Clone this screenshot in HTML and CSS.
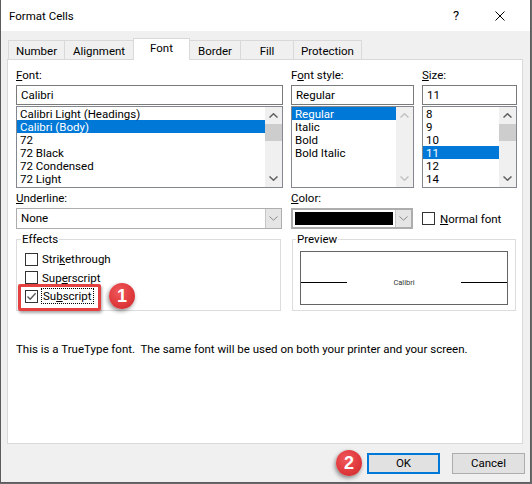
FILE: index.html
```html
<!DOCTYPE html>
<html lang="en">
<head>
	<meta charset="UTF-8">
	<title>Format Cells</title>
	<link rel="stylesheet" href="styles.css">
</head>
<body>
<div class="window">
	<div class="titlebar">
		<span class="title">Format Cells</span>
		<span class="tbtn help">?</span>
		<span class="tbtn close">
			<svg width="10" height="10" viewBox="0 0 10 10"><path d="M0.5 0.5L9.5 9.5M9.5 0.5L0.5 9.5"/></svg>
		</span>
	</div>

	<div class="client">
		<div class="tabs">
			<div class="tab w-number">Number</div>
			<div class="tab w-align">Alignment</div>
			<div class="tab active w-font">Font</div>
			<div class="tab w-border">Border</div>
			<div class="tab w-fill">Fill</div>
			<div class="tab w-prot">Protection</div>
		</div>

		<div class="panel">
			<div class="top-grid">
				<div class="col">
					<div class="lbl"><u>F</u>ont:</div>
					<div class="field">Calibri</div>
					<div class="listbox">
						<ul class="items">
							<li>Calibri Light (Headings)</li>
							<li class="sel">Calibri (Body)</li>
							<li>72</li>
							<li>72 Black</li>
							<li>72 Condensed</li>
							<li>72 Light</li>
						</ul>
						<div class="vscroll">
							<span class="sarrow"><svg width="9" height="5" viewBox="0 0 9 5"><polyline points="0.5,4.5 4.5,0.8 8.5,4.5"/></svg></span>
							<span class="thumb"></span>
							<span class="sfill"></span>
							<span class="sarrow"><svg width="9" height="5" viewBox="0 0 9 5"><polyline points="0.5,0.5 4.5,4.2 8.5,0.5"/></svg></span>
						</div>
					</div>
				</div>
				<div class="col">
					<div class="lbl">F<u>o</u>nt style:</div>
					<div class="field">Regular</div>
					<div class="listbox">
						<ul class="items">
							<li class="sel">Regular</li>
							<li>Italic</li>
							<li>Bold</li>
							<li>Bold Italic</li>
						</ul>
						<div class="vscroll off">
							<span class="sarrow"><svg width="9" height="5" viewBox="0 0 9 5"><polyline points="0.5,4.5 4.5,0.8 8.5,4.5"/></svg></span>
							<span class="sfill"></span>
							<span class="sarrow"><svg width="9" height="5" viewBox="0 0 9 5"><polyline points="0.5,0.5 4.5,4.2 8.5,0.5"/></svg></span>
						</div>
					</div>
				</div>
				<div class="col">
					<div class="lbl"><u>S</u>ize:</div>
					<div class="field">11</div>
					<div class="listbox">
						<ul class="items">
							<li>8</li>
							<li>9</li>
							<li>10</li>
							<li class="sel">11</li>
							<li>12</li>
							<li>14</li>
						</ul>
						<div class="vscroll">
							<span class="sarrow"><svg width="9" height="5" viewBox="0 0 9 5"><polyline points="0.5,4.5 4.5,0.8 8.5,4.5"/></svg></span>
							<span class="thumb"></span>
							<span class="sfill"></span>
							<span class="sarrow"><svg width="9" height="5" viewBox="0 0 9 5"><polyline points="0.5,0.5 4.5,4.2 8.5,0.5"/></svg></span>
						</div>
					</div>
				</div>
			</div>

			<div class="mid-grid">
				<div class="col">
					<div class="lbl"><u>U</u>nderline:</div>
					<div class="combo under">
						<span class="combo-text">None</span>
						<span class="drop"><svg width="9" height="5" viewBox="0 0 9 5"><polyline points="0.5,0.5 4.5,4.2 8.5,0.5"/></svg></span>
					</div>
				</div>
				<div class="col">
					<div class="lbl"><u>C</u>olor:</div>
					<div class="combo color">
						<span class="swatch"></span>
						<span class="drop"><svg width="9" height="5" viewBox="0 0 9 5"><polyline points="0.5,0.5 4.5,4.2 8.5,0.5"/></svg></span>
					</div>
				</div>
				<div class="col normal">
					<span class="chk"></span>
					<span><u>N</u>ormal font</span>
				</div>
			</div>

			<div class="groups">
				<fieldset class="group effects">
					<legend>Effects</legend>
					<div class="crow"><span class="chk"></span><span>Stri<u>k</u>ethrough</span></div>
					<div class="crow"><span class="chk"></span><span>Sup<u>e</u>rscript</span></div>
					<div class="crow"><span class="chk on">
						<svg width="11" height="11" viewBox="0 0 11 11"><polyline points="1.5,5.5 4.2,8.3 9.6,2.2"/></svg>
					</span><span class="focus">Su<u>b</u>script</span></div>
				</fieldset>
				<fieldset class="group preview">
					<legend>Preview</legend>
					<div class="pbox">
						<span class="pline"></span>
						<span class="ptext">Calibri</span>
						<span class="pline"></span>
					</div>
				</fieldset>
			</div>

			<p class="note">This is a TrueType font.&nbsp; The same font will be used on both your printer and your screen.</p>
		</div>

		<div class="buttons">
			<div class="btn default">OK</div>
			<div class="btn">Cancel</div>
		</div>
	</div>

	<!-- callouts drawn over the dialog -->
	<div class="mark"></div>
	<div class="badge b1">1</div>
	<div class="badge b2">2</div>
</div>
</body>
</html>
```

FILE: styles.css
```css
*{margin:0;padding:0;box-sizing:border-box;}
html,body{height:100%;}
body{
	background:#6a6a6a;
	font-family:Roboto,"Liberation Sans",sans-serif;
	font-size:11.5px;
	color:#000;
}
u{text-decoration:underline;text-underline-offset:1px;}

.window{
	position:relative;
	width:531px;
	height:483px;
	background:#f0f0f0;
	border:1px solid #5c5c5c;
	border-top:0;
	display:flex;
	flex-direction:column;
}

/* title bar */
.titlebar{
	height:31px;
	background:#fff;
	display:flex;
	align-items:center;
	padding-left:8px;
	padding-right:8px;
}
.title{flex:1;}
.tbtn{
	width:44px;
	height:31px;
	display:flex;
	align-items:center;
	justify-content:center;
}
.help{font-size:13px;}
.close svg path{stroke:#000;stroke-width:1;fill:none;}

/* tabs */
.client{flex:1;padding:7px 6px 0 6px;}
.tabs{
	display:flex;
	align-items:flex-end;
	height:21px;
	padding-left:1px;
}
.tab{
	height:19px;
	margin-right:-1px;
	border:1px solid #d9d9d9;
	border-bottom:0;
	background:#f0f0f0;
	text-align:center;
	padding-top:3px;
	line-height:15px;
}
.tab.active{
	height:22px;
	margin-bottom:-1px;
	background:#fff;
	position:relative;
	z-index:1;
	padding-top:2px;
}
.w-number{width:57px;}
.w-align{width:70px;}
.w-font{width:57px;}
.w-border{width:52px;}
.w-fill{width:54px;}
.w-prot{width:69px;}

.panel{
	width:516px;
	height:385px;
	background:#fff;
	border:1px solid #d9d9d9;
	padding:7px 0 0 8px;
}

/* font / style / size lists */
.top-grid{
	display:grid;
	grid-template-columns:267px 123px 95px;
	column-gap:8px;
}
.lbl{height:18px;line-height:17px;}
.field{
	height:20px;
	border:1px solid #7a7a7a;
	padding-left:4px;
	line-height:18px;
}
.listbox{
	margin-top:1px;
	height:82px;
	border:1px solid #828790;
	display:flex;
}
.items{list-style:none;flex:1;}
.items li{
	height:13px;
	line-height:14px;
	padding-left:3px;
	white-space:nowrap;
}
.items li.sel{background:#0078d7;color:#fff;}
.vscroll{
	width:17px;
	background:#f0f0f0;
	display:flex;
	flex-direction:column;
}
.sarrow{
	height:17px;
	display:flex;
	align-items:center;
	justify-content:center;
}
.sarrow svg polyline{fill:none;stroke:#606060;stroke-width:1.5;}
.vscroll.off .sarrow svg polyline{stroke:#c2c2c2;}
.thumb{height:17px;background:#cdcdcd;}
.sfill{flex:1;}

/* underline / color row */
.mid-grid{
	display:grid;
	grid-template-columns:267px 123px 95px;
	column-gap:8px;
	margin-top:2px;
}
.combo{
	height:21px;
	border:1px solid #adadad;
	display:flex;
	background:#fff;
}
.combo.under{width:266px;}
.combo-text{flex:1;padding-left:4px;line-height:19px;}
.drop{
	width:16px;
	background:#e5e5e5;
	border-left:1px solid #c6c6c6;
	display:flex;
	align-items:center;
	justify-content:center;
}
.drop svg polyline{fill:none;stroke:#8a8a8a;stroke-width:1;}
.combo.color{width:122px;border:2px solid #adadad;padding:2px 0 2px 2px;}
.swatch{width:98px;background:#000;}
.combo.color .drop{margin:-2px 0 -2px 2px;}
.normal{
	display:flex;
	align-items:center;
	gap:5px;
	padding-top:18px;
}

.chk{
	width:13px;
	height:13px;
	border:1px solid #333;
	background:#fff;
	display:flex;
	align-items:center;
	justify-content:center;
	flex:none;
}
.chk.on svg polyline{fill:none;stroke:#555;stroke-width:1.3;}

/* effects / preview groups */
.groups{
	display:grid;
	grid-template-columns:265px 224px;
	column-gap:11px;
	margin-top:2px;
}
.group{
	border:1px solid #dcdcdc;
	height:80px;
}
.group legend{
	margin-left:-4px;
	padding:0 1px;
	line-height:16px;
}
.effects{padding:3px 8px 0 8px;}
.crow{
	height:18px;
	display:flex;
	align-items:center;
	gap:4px;
}
.crow + .crow{margin-top:0.5px;}
.focus{outline:1px dotted #000;padding:0 1px;line-height:14px;}

.preview{padding:4px 7px 0 7px;}
.pbox{
	height:54px;
	border:1px solid #646464;
	display:flex;
	align-items:center;
	padding-top:9px;
}
.pline{width:46px;height:1px;background:#000;}
.ptext{flex:1;text-align:center;font-size:7.5px;color:#333;}

.note{margin-top:30px;line-height:16px;}

/* dialog buttons */
.buttons{
	display:flex;
	justify-content:flex-end;
	gap:12px;
	margin-top:9px;
	margin-right:-1px;
}
.btn{
	width:73px;
	height:21px;
	background:#e1e1e1;
	border:1px solid #adadad;
	text-align:center;
	line-height:19px;
}
.btn.default{border:2px solid #0078d7;line-height:17px;}

/* tutorial callouts */
.mark{
	position:absolute;
	left:17px;
	top:284px;
	width:83px;
	height:27px;
	border:3px solid #e4403f;
	border-radius:2px;
	box-shadow:1px 2px 3px rgba(0,0,0,0.35);
}
.badge{
	position:absolute;
	width:26px;
	height:26px;
	border-radius:50%;
	background:radial-gradient(circle at 40% 35%, #f0585a 0%, #e03a3d 55%, #c82a2d 100%);
	box-shadow:-1px 2px 4px rgba(0,0,0,0.45);
	color:#fff;
	font-family:"Liberation Sans",Arial,sans-serif;
	font-weight:bold;
	font-size:18px;
	line-height:26px;
	text-align:center;
}
.b1{left:108px;top:283px;}
.b2{left:335px;top:450px;}
```
